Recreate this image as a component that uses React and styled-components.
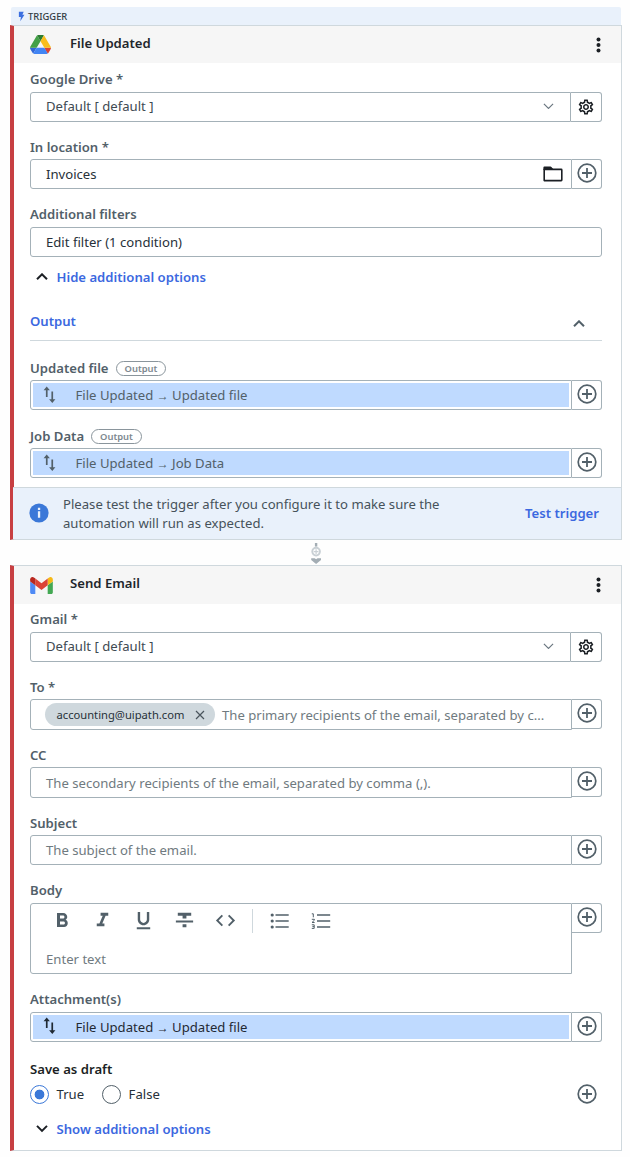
import React, { useState } from 'react';
import styled, { createGlobalStyle } from 'styled-components';
import {
    MdOutlineSettings,
    MdFormatBold,
    MdFormatItalic,
    MdFormatUnderlined,
    MdFormatStrikethrough,
    MdCode,
} from 'react-icons/md';

function Chevron({ up, size = 11, width = 2, color = '#1b1f24' }) {
    return (
        <svg width={size} height={size * 0.6} viewBox="0 0 12 7.2" fill="none" stroke={color} strokeWidth={width}>
            <path d={up ? 'M1 6.3 6 1.3l5 5' : 'M1 .9l5 5 5-5'} />
        </svg>
    )
}

function PlusIcon() {
    return (
        <svg width="20" height="20" viewBox="0 0 20 20" fill="none" stroke="#526069">
            <circle cx="10" cy="10" r="8.8" strokeWidth="1.7" />
            <path d="M10 5v10M5 10h10" strokeWidth="1.8" />
        </svg>
    )
}

function DriveLogo() {
    return (
        <svg width="21" height="19" viewBox="0 0 87.3 78">
            <path d="m6.6 66.85 3.85 6.65c.8 1.4 1.95 2.5 3.3 3.3l13.75-23.8h-27.5c0 1.55.4 3.1 1.2 4.5z" fill="#3367d6" />
            <path d="m43.65 25-13.75-23.8c-1.35.8-2.5 1.9-3.3 3.3l-25.4 44a9.06 9.06 0 0 0 -1.2 4.5h27.5z" fill="#43a047" />
            <path d="m73.55 76.8c1.35-.8 2.5-1.9 3.3-3.3l1.6-2.75 7.65-13.25c.8-1.4 1.2-2.95 1.2-4.5h-27.5l5.85 11.5z" fill="#dc4332" />
            <path d="m43.65 25 13.75-23.8c-1.35-.8-2.9-1.2-4.5-1.2h-18.5c-1.6 0-3.15.45-4.5 1.2z" fill="#2c7d32" />
            <path d="m59.8 53h-32.3l-13.75 23.8c1.35.8 2.9 1.2 4.5 1.2h50.8c1.6 0 3.15-.45 4.5-1.2z" fill="#4285f4" />
            <path d="m73.4 26.5-12.7-22c-.8-1.4-1.95-2.5-3.3-3.3l-13.75 23.8 16.15 28h27.45c0-1.55-.4-3.1-1.2-4.5z" fill="#f8bd1c" />
        </svg>
    )
}

function GmailLogo() {
    return (
        <svg width="23" height="17" viewBox="52 42 88 66">
            <path fill="#4f8af5" d="M58 108h14V74L52 59v43c0 3.32 2.69 6 6 6" />
            <path fill="#43a853" d="M120 108h14c3.32 0 6-2.69 6-6V59l-20 15" />
            <path fill="#f6b916" d="M120 48v26l20-15v-8c0-7.42-8.47-11.65-14.4-7.2" />
            <path fill="#dc4437" d="M72 74V48l24 18 24-18v26L96 92" />
            <path fill="#b9271f" d="M52 51v8l20 15V48l-5.6-4.2c-5.94-4.45-14.4-.22-14.4 7.2" />
        </svg>
    )
}

function FolderIcon() {
    return (
        <svg width="20" height="16" viewBox="0 0 20 16">
            <path d="M1.2 14.6V3.4h17q.6 0 .6.6v10q0 .6-.6.6z" fill="none" stroke="#1b1f24" strokeWidth="1.6" strokeLinejoin="round" />
            <path d="M.4 4V1.6Q.4.6 1.4.6h6.2q.5 0 .8.4l1.8 2V4z" fill="#1b1f24" />
        </svg>
    )
}

function SwapIcon() {
    return (
        <svg width="14" height="18" viewBox="0 0 14 18" fill="currentColor">
            <path d="M2.9 11V4.3H.6L3.7.4l3.2 3.9H4.6V11z" />
            <path d="M8.4 5.5v7.7H6.1l3.2 3.9 3.1-3.9h-2.3V5.5z" />
        </svg>
    )
}

function BulletedList() {
    return (
        <svg width="20" height="16" viewBox="0 0 20 16" fill="#526069">
            <circle cx="2.2" cy="2" r="1.6" />
            <circle cx="2.2" cy="8" r="1.6" />
            <circle cx="2.2" cy="14" r="1.6" />
            <path d="M5.5 1.2h13.2v1.5H5.5zM5.5 7.2h13.2v1.5H5.5zM5.5 13.2h13.2v1.5H5.5z" />
        </svg>
    )
}

function NumberedList() {
    return (
        <svg width="20" height="16" viewBox="0 0 20 16" fill="none" stroke="#526069">
            <path d="M6 2h13.2M6 8h13.2M6 14h13.2" strokeWidth="1.5" />
            <path d="M.8.8h1.5v3.5M.8 6.3h2.6v.9L1 9.5h2.6M.8 11.8h2.4v3.6H.8M1.4 13.6h1.8" strokeWidth="1" />
        </svg>
    )
}

function Connector() {
    return (
        <ConnectorRow>
            <svg width="12" height="23" viewBox="0 0 12 23">
                <path d="M4.9 1h2.4v3.6H4.9z" fill="#a3adb4" />
                <circle cx="6.1" cy="9.6" r="3.8" fill="#fff" stroke="#c9d0d5" strokeWidth="2" />
                <path d="M6.1 7.3v4.6M3.8 9.6h4.6" stroke="#c9d0d5" strokeWidth="1.2" />
                <path d="M1.2 16.3h3.5l1.4.9 1.4-.9H11v1.6l-4.9 4-4.9-4z" fill="#a3adb4" />
            </svg>
        </ConnectorRow>
    )
}

function CardHeader({ logo, title, height }) {
    return (
        <Header $height={height}>
            <Logo>{logo}</Logo>
            <Title>{title}</Title>
            <MenuButton>
                <svg width="5" height="16" viewBox="0 0 5 16" fill="#1b1f24">
                    <circle cx="2.5" cy="2.4" r="2" />
                    <circle cx="2.5" cy="8" r="2" />
                    <circle cx="2.5" cy="13.6" r="2" />
                </svg>
            </MenuButton>
        </Header>
    )
}

function Field({ label, top = 15, gap = 2, dark, output, children }) {
    return (
        <FieldBlock $top={top}>
            <Label $gap={gap} $dark={dark}>
                {label}
                {output && <OutputTag>Output</OutputTag>}
            </Label>
            <Row>{children}</Row>
        </FieldBlock>
    )
}

function AddButton() {
    return <SideButton><PlusIcon /></SideButton>
}

function Connection() {
    return (
        <>
            <SelectBox>
                Default [ default ]
                <SelectArrow><Chevron width={1.3} color="#6b7780" /></SelectArrow>
            </SelectBox>
            <SideButton $wide>
                <MdOutlineSettings size={18} color="#1b1f24" />
            </SideButton>
        </>
    )
}

function VariableInput({ from, to, dark }) {
    return (
        <>
            <VariableBox>
                <Variable $dark={dark}>
                    <SwapIcon />
                    <VariableText>{from} <Arrow>→</Arrow> {to}</VariableText>
                </Variable>
            </VariableBox>
            <AddButton />
        </>
    )
}

function App() {
    const [draft, setDraft] = useState(true);

    return (
        <Page>
            <GlobalStyle />
            <TriggerBar>
                <svg width="7" height="11" viewBox="0 0 8 11" fill="#3b6fe0">
                    <path d="M1 0h5.5L5 3.6h2.4L2.6 11l.7-5H1z" />
                </svg>
                TRIGGER
            </TriggerBar>
            <Card>
                <CardHeader logo={<DriveLogo />} title="File Updated" height={37} />
                <Fields>
                    <Field label="Google Drive *" top={6} gap={3}>
                        <Connection />
                    </Field>
                    <Field label="In location *">
                        <InputBox $joined>
                            Invoices
                            <FolderSlot><FolderIcon /></FolderSlot>
                        </InputBox>
                        <AddButton />
                    </Field>
                    <Field label="Additional filters" gap={3}>
                        <InputBox>Edit filter (1 condition)</InputBox>
                    </Field>
                    <OptionsToggle $top={10}>
                        <Chevron up size={12} />
                        Hide additional options
                    </OptionsToggle>
                    <SectionTitle>
                        Output
                        <Chevron up size={12} color="#526069" />
                    </SectionTitle>
                    <Field label="Updated file" top={17} output>
                        <VariableInput from="File Updated" to="Updated file" />
                    </Field>
                    <Field label="Job Data" top={16} output>
                        <VariableInput from="File Updated" to="Job Data" />
                    </Field>
                </Fields>
                <Banner>
                    <InfoSlot>
                        <svg width="20" height="20" viewBox="0 0 20 20">
                            <circle cx="10" cy="10" r="9.6" fill="#3b78d8" />
                            <path d="M8.9 4.8h2.3v2.1H8.9zM8.9 8.3h2.3v6.4H8.9z" fill="#eaf1fb" />
                        </svg>
                    </InfoSlot>
                    <BannerText>
                        Please test the trigger after you configure it to make sure the automation will run as expected.
                    </BannerText>
                    <BannerLink>Test trigger</BannerLink>
                </Banner>
            </Card>
            <Connector />
            <Card>
                <CardHeader logo={<GmailLogo />} title="Send Email" height={38} />
                <Fields>
                    <Field label="Gmail *" top={5} gap={3}>
                        <Connection />
                    </Field>
                    <Field label="To *">
                        <InputBox $joined $height={31} $chips $color="#6f7a80">
                            <Chip>
                                accounting@uipath.com
                                <svg width="10" height="10" viewBox="0 0 10 10" stroke="#4a555d" strokeWidth="1.2">
                                    <path d="M1 1l8 8M9 1L1 9" />
                                </svg>
                            </Chip>
                            The primary recipients of the email, separated by c...
                        </InputBox>
                        <AddButton />
                    </Field>
                    <Field label="CC">
                        <InputBox $joined $height={31} $color="#6f7a80">
                            The secondary recipients of the email, separated by comma (,).
                        </InputBox>
                        <AddButton />
                    </Field>
                    <Field label="Subject">
                        <InputBox $joined $color="#6f7a80">The subject of the email.</InputBox>
                        <AddButton />
                    </Field>
                    <Field label="Body" gap={3}>
                        <Editor>
                            <Toolbar>
                                <Tool><MdFormatBold size={24} /></Tool>
                                <Tool><MdFormatItalic size={23} /></Tool>
                                <Tool><MdFormatUnderlined size={23} /></Tool>
                                <Tool><MdFormatStrikethrough size={23} /></Tool>
                                <Tool><MdCode size={23} /></Tool>
                                <Separator />
                                <Tool><BulletedList /></Tool>
                                <Tool><NumberedList /></Tool>
                            </Toolbar>
                            <Placeholder>Enter text</Placeholder>
                        </Editor>
                        <AddButton />
                    </Field>
                    <Field label="Attachment(s)" gap={3}>
                        <VariableInput from="File Updated" to="Updated file" dark />
                    </Field>
                    <Field label="Save as draft" top={17} gap={0} dark>
                        <Choices>
                            <Choice onClick={() => setDraft(true)}>
                                <Radio $on={draft} />
                                True
                            </Choice>
                            <Choice onClick={() => setDraft(false)}>
                                <Radio $on={!draft} />
                                False
                            </Choice>
                            <ChoiceAdd><PlusIcon /></ChoiceAdd>
                        </Choices>
                    </Field>
                    <OptionsToggle $top={10}>
                        <Chevron size={12} />
                        Show additional options
                    </OptionsToggle>
                </Fields>
                <CardEnd />
            </Card>
        </Page>
    )
}

const GlobalStyle = createGlobalStyle`
    body {
        margin: 0;
        background: #fefefe;
    }
    * {
        box-sizing: border-box;
    }
    svg {
        display: block;
        flex: none;
    }
`

const Page = styled.div`
    width: 630px;
    height: 1157px;
    padding: 7px 8px 0 10px;
    overflow: hidden;
    font-family: "Noto Sans", sans-serif;
    font-size: 13.13px;
    line-height: 20px;
    color: #273139;
`
const TriggerBar = styled.div`
    display: flex;
    align-items: center;
    gap: 3px;
    height: 18px;
    margin: 0 1px;
    padding: 1px 0 0 7px;
    border-radius: 2px 2px 0 0;
    background: #e9f1fb;
    color: #333c43;
    font-size: 9.4px;
    font-weight: 500;
`
const Card = styled.section`
    border: 1px solid #cfd8dd;
    border-left: 4px solid #c73f42;
    background: #fff;
`
const Header = styled.header`
    display: flex;
    align-items: center;
    height: ${props => props.$height}px;
    padding: 0 20px 0 16px;
    background: #f6f6f6;
`
const Logo = styled.div`
    display: flex;
    width: 40px;
`
const Title = styled.h2`
    flex: 1;
    margin: 0;
    padding-bottom: 4px;
    color: #1f262c;
    font-size: 13.13px;
    font-weight: 600;
`
const MenuButton = styled.div`
    display: flex;
`
const Fields = styled.div`
    padding: 0 19px 0 16px;
`
const FieldBlock = styled.div`
    padding-top: ${props => props.$top}px;
`
const Label = styled.div`
    display: flex;
    align-items: center;
    height: 20px;
    margin-bottom: ${props => props.$gap}px;
    color: ${props => props.$dark ? '#1b1f24' : '#526069'};
    font-weight: 600;
`
const OutputTag = styled.span`
    height: 15px;
    margin-left: 7px;
    padding: 0 8px;
    border: 1px solid #8a959c;
    border-radius: 8px;
    color: #7d888f;
    font-size: 9.4px;
    font-weight: 600;
    line-height: 13px;
`
const Row = styled.div`
    display: flex;
    align-items: flex-start;
`
const InputBox = styled.div`
    display: flex;
    align-items: center;
    flex: 1;
    min-width: 0;
    height: ${props => props.$height || 30}px;
    padding-left: ${props => props.$chips ? 14 : 15}px;
    border: 1px solid #a4b1b8;
    border-radius: ${props => props.$joined ? '3px 0 0 3px' : '3px'};
    color: ${props => props.$color || '#273139'};
    white-space: nowrap;
`
const SelectBox = styled(InputBox).attrs({ $joined: true, $color: '#404a52' })`
    padding-bottom: 2px;
`
const SelectArrow = styled.div`
    margin-left: auto;
    padding-right: 16px;
`
const FolderSlot = styled.div`
    margin-left: auto;
    padding: 0 8px 1px 0;
`
const SideButton = styled.div`
    display: flex;
    align-items: center;
    justify-content: center;
    width: ${props => props.$wide ? 31 : 30}px;
    height: 30px;
    padding-bottom: ${props => props.$wide ? 0 : 2}px;
    border: 1px solid #a4b1b8;
    border-left: 0;
    border-radius: 0 3px 3px 0;
`
const OptionsToggle = styled.div`
    display: flex;
    align-items: center;
    gap: 9px;
    height: 20px;
    margin-top: ${props => props.$top}px;
    padding-left: 5.5px;
    color: #3b68e0;
    font-weight: 600;
`
const SectionTitle = styled.div`
    display: flex;
    justify-content: space-between;
    height: 30px;
    margin-top: 24px;
    padding-right: 17px;
    border-bottom: 1px solid #cfd8dd;
    color: #3b68e0;
    font-weight: 600;

    svg {
        margin-top: 9px;
    }
`
const VariableBox = styled(InputBox).attrs({ $joined: true })`
    padding: 2px;
`
const Variable = styled.div`
    display: flex;
    align-items: center;
    flex: 1;
    height: 24px;
    padding-left: 10px;
    background: #bfdaff;
    color: ${props => props.$dark ? '#1f2933' : '#526069'};

    svg {
        margin-bottom: ${props => props.$dark ? 3 : 1}px;
    }
`
const VariableText = styled.span`
    margin-left: 18.5px;
    padding-top: 1px;
`
const Arrow = styled.span`
    font-size: 12px;
`
const Banner = styled.div`
    display: flex;
    align-items: center;
    height: 52px;
    margin: 9px 0 0 -1px;
    padding: 0 22px 0 16px;
    border-top: 1px solid #cfd8dd;
    background: #e9f1fb;
`
const InfoSlot = styled.div`
    padding-bottom: 2px;
`
const BannerText = styled.p`
    width: 400px;
    margin: 0 0 0 14px;
    color: #46525a;
    line-height: 19px;
`
const BannerLink = styled.a`
    margin-left: auto;
    padding-bottom: 2px;
    color: #3b68e0;
    font-weight: 600;
`
const ConnectorRow = styled.div`
    display: flex;
    justify-content: center;
    height: 25px;
    padding-top: 2px;
`
const Chip = styled.div`
    display: flex;
    align-items: center;
    justify-content: space-between;
    width: 170px;
    height: 23px;
    margin-right: 7px;
    padding: 0 10px 0 11.5px;
    border-radius: 12px;
    background: #cfd8dd;
    color: #273139;
    font-size: 11.2px;
`
const Editor = styled.div`
    flex: 1;
    height: 71px;
    border: 1px solid #a4b1b8;
    border-radius: 3px 0 0 3px;
`
const Toolbar = styled.div`
    display: flex;
    align-items: center;
    height: 33px;
    padding-left: 10px;
    color: #526069;
`
const Tool = styled.div`
    display: flex;
    justify-content: center;
    width: 41px;
`
const Separator = styled.div`
    width: 1px;
    height: 24px;
    margin: 0 6px;
    background: #cfd8dd;
`
const Placeholder = styled.div`
    padding: 12px 0 0 15px;
    color: #6f7a80;
`
const Choices = styled.div`
    display: flex;
    align-items: center;
    flex: 1;
    height: 30px;
`
const Choice = styled.div`
    display: flex;
    align-items: center;
    gap: 7.5px;
    margin-right: 18px;
`
const Radio = styled.span`
    width: 19px;
    height: 19px;
    border: 1px solid ${props => props.$on ? '#3b78d8' : '#526069'};
    border-radius: 50%;
    background: ${props => props.$on ? 'radial-gradient(circle, #3b78d8 4.6px, #fff 5.2px)' : '#fff'};
`
const ChoiceAdd = styled.div`
    margin-left: auto;
    padding: 0 5px 1px 0;
`
const CardEnd = styled.div`
    height: 11px;
`

export default App
